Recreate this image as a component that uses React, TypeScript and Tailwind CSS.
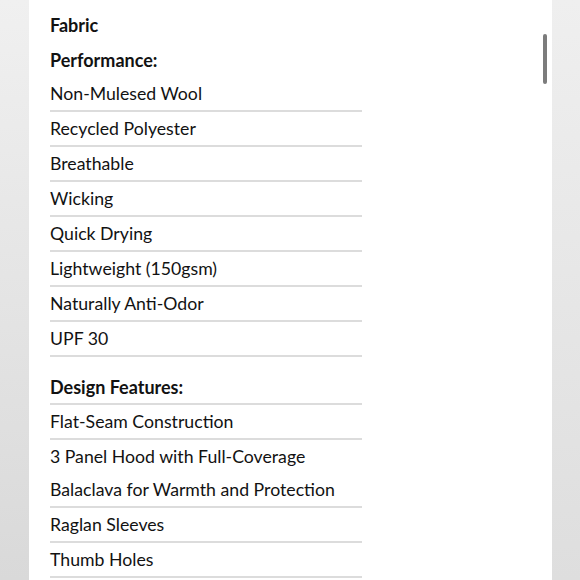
import React from "react";

const performance = [
  "Non-Mulesed Wool",
  "Recycled Polyester",
  "Breathable",
  "Wicking",
  "Quick Drying",
  "Lightweight (150gsm)",
  "Naturally Anti-Odor",
  "UPF 30",
];

const design = [
  "Flat-Seam Construction",
  "3 Panel Hood with Full-Coverage Balaclava for Warmth and Protection",
  "Raglan Sleeves",
  "Thumb Holes",
];

export default function App() {
  return (
    <div
      className="flex h-[580px] w-[580px] overflow-hidden bg-white text-[#121212]"
      style={{ fontFamily: "Lato, 'Liberation Sans', sans-serif" }}
    >
      <div className="w-[29px] shrink-0 bg-gradient-to-b from-[#f0f0f0] to-[#d9d9d9]" />
      <div className="relative flex-1 bg-white pl-[21px] pt-[8px]">
        <div className="h-[35px] text-[18px] font-bold leading-[35px]">Fabric</div>
        <div className="h-[34px] text-[18px] font-bold leading-[34px]">Performance:</div>
        <ul className="w-[312px]">
          {performance.map((t) => (
            <li
              key={t}
              className="border-b-2 border-[#dcdcdc] text-[17.7px] leading-[33px]"
            >
              {t}
            </li>
          ))}
        </ul>
        <div className="mt-[14px] w-[312px] border-b-2 border-[#dcdcdc] text-[18px] font-bold leading-[32px]">
          Design Features:
        </div>
        <ul className="w-[312px]">
          {design.map((t) => (
            <li
              key={t}
              className="border-b-2 border-[#dcdcdc] text-[17.7px] leading-[33px]"
            >
              {t}
            </li>
          ))}
        </ul>
        <div className="absolute left-[514px] top-[34px] h-[50px] w-[4px] rounded-full bg-[#7c7c7c]" />
      </div>
      <div className="w-[28px] shrink-0 bg-gradient-to-b from-[#efefef] to-[#dedede]" />
    </div>
  );
}
